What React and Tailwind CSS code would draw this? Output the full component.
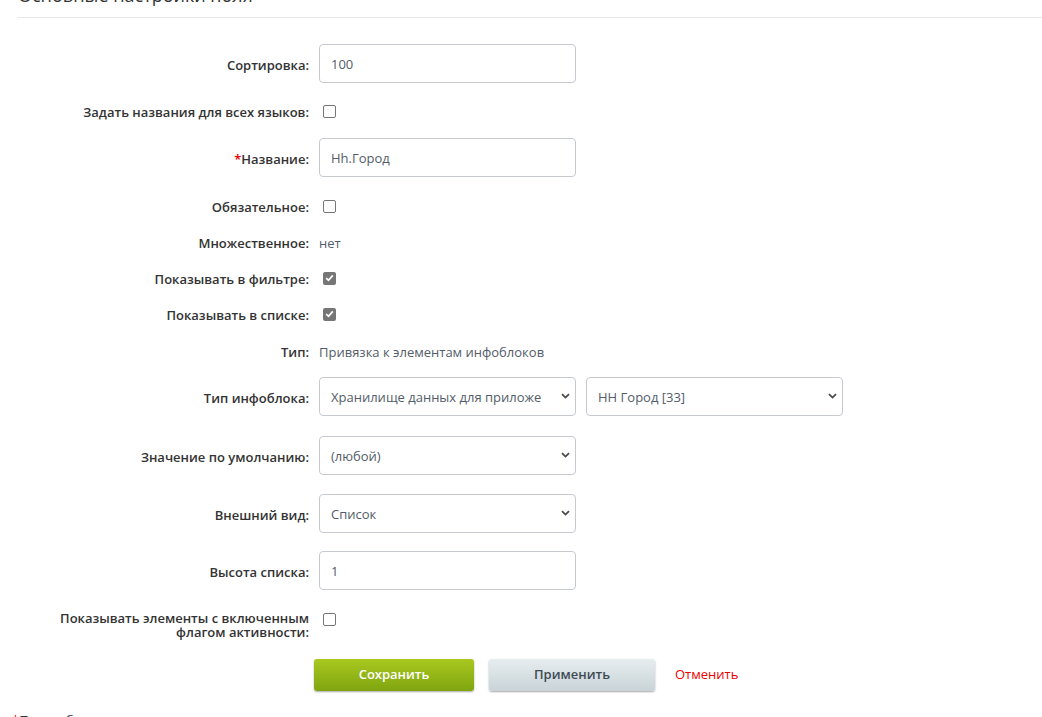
import React from "react";

function Chevron() {
  return (
    <svg width="9" height="6" viewBox="0 0 9 6" className="shrink-0">
      <path d="M1 1.2 L4.5 4.6 L8 1.2" fill="none" stroke="#4a4a4a" strokeWidth="1.8" />
    </svg>
  );
}

function Box({ checked }) {
  if (checked) {
    return (
      <div className="ml-[4px] flex h-[13px] w-[13px] items-center justify-center rounded-[2px] bg-[#767676]">
        <svg width="9" height="8" viewBox="0 0 9 8">
          <path d="M1.2 4.2 L3.5 6.3 L7.8 1.4" fill="none" stroke="#fff" strokeWidth="1.7" />
        </svg>
      </div>
    );
  }
  return <div className="ml-[4px] h-[13px] w-[13px] rounded-[2px] border border-[#767676] bg-white" />;
}

function Input({ value }) {
  return (
    <div className="mb-[2px] flex h-[39px] w-[257px] items-center rounded-[4px] border border-[#c6cacf] bg-white pl-[11px] pt-[3px] text-[13px] text-[#535c69]">
      {value}
    </div>
  );
}

function Select({ value, w }) {
  return (
    <div className={`mb-[2px] flex h-[39px] ${w} items-center justify-between rounded-[4px] border border-[#c6cacf] bg-white pl-[11px] pr-[5px] text-[13px] text-[#535c69]`}>
      <span className="overflow-hidden whitespace-nowrap pt-[3px]">{value}</span>
      <Chevron />
    </div>
  );
}

function Label({ children }) {
  return (
    <div className="w-[309px] shrink-0 pt-[4px] text-right text-[13px] font-semibold text-[#333]">{children}</div>
  );
}

function Row({ h, label, children }) {
  return (
    <div className={h}>
      <div className="flex h-[40px] items-center">
        <Label>{label}</Label>
        <div className="ml-[10px] flex items-center">{children}</div>
      </div>
    </div>
  );
}

export default function App() {
  return (
    <div className="min-h-[717px] w-[1042px] overflow-hidden bg-white font-['Open_Sans','Liberation_Sans',sans-serif]">
      <div className="h-[17px] overflow-hidden">
        <div className="-mt-[17px] ml-[18px] text-[18px] leading-[24px] text-[#333]">Основные настройки поля</div>
      </div>
      <div className="ml-[17px] h-px bg-[#e6e6e6]" />
      <div className="h-[26px]" />

      <Row h="h-[47px]" label="Сортировка:">
        <Input value="100" />
      </Row>
      <Row h="h-[47px]" label="Задать названия для всех языков:">
        <Box />
      </Row>
      <Row
        h="h-[48px]"
        label={
          <>
            <span className="text-[#e00]">*</span>Название:
          </>
        }
      >
        <Input value="Hh.Город" />
      </Row>
      <Row h="h-[36px]" label="Обязательное:">
        <Box />
      </Row>
      <Row h="h-[36px]" label="Множественное:">
        <span className="pt-[4px] text-[13px] text-[#535c69]">нет</span>
      </Row>
      <Row h="h-[36px]" label="Показывать в фильтре:">
        <Box checked />
      </Row>
      <Row h="h-[37px]" label="Показывать в списке:">
        <Box checked />
      </Row>
      <Row h="h-[46px]" label="Тип:">
        <span className="pt-[4px] text-[13px] text-[#535c69]">Привязка к элементам инфоблоков</span>
      </Row>
      <Row h="h-[59px]" label="Тип инфоблока:">
        <div className="flex gap-[10px]">
          <Select w="w-[257px]" value="Хранилище данных для приложе" />
          <Select w="w-[257px]" value="НН Город [33]" />
        </div>
      </Row>
      <Row h="h-[58px]" label="Значение по умолчанию:">
        <Select w="w-[257px]" value="(любой)" />
      </Row>
      <Row h="h-[57px]" label="Внешний вид:">
        <Select w="w-[257px]" value="Список" />
      </Row>
      <Row h="h-[60px]" label="Высота списка:">
        <Input value="1" />
      </Row>

      <div className="flex h-[48px] items-start">
        <div className="w-[309px] shrink-0 text-right text-[13px] font-semibold leading-[14px] text-[#333]">
          Показывать элементы с включенным
          <br />
          флагом активности:
        </div>
        <div className="ml-[10px] mt-[2px] flex">
          <Box />
        </div>
      </div>

      <div className="flex h-[32px] items-center">
        <div className="ml-[314px] flex h-[32px] w-[160px] items-center justify-center rounded-[3px] bg-gradient-to-b from-[#a9c81f] to-[#7fa50f] text-[13px] font-semibold text-white shadow-[0_1px_2px_rgba(0,0,0,0.35)]">
          Сохранить
        </div>
        <div className="ml-[15px] flex h-[32px] w-[166px] items-center justify-center rounded-[3px] bg-gradient-to-b from-[#e6edef] to-[#c9d4d8] text-[13px] font-semibold text-[#3f4b54] shadow-[0_1px_2px_rgba(0,0,0,0.35)]">
          Применить
        </div>
        <div className="ml-[20px] text-[13px] text-[#e00]">Отменить</div>
      </div>

      <div className="ml-[12px] mt-[21px] text-[13px] leading-[16px] text-[#333]">
        <span className="text-[#e00]">*</span>Поля, обязательные для заполнения
      </div>
    </div>
  );
}
